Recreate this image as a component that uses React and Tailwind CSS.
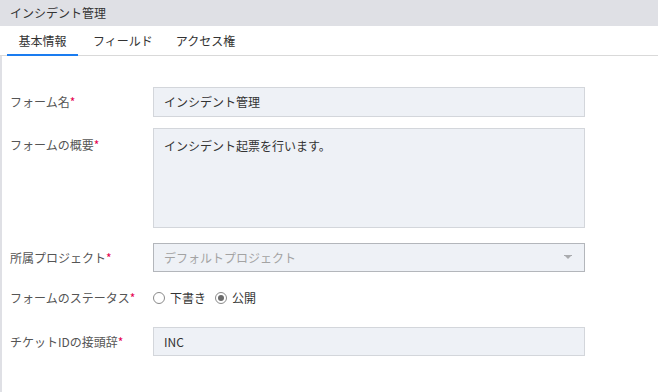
export default function App() {
  const font = { fontFamily: '"Noto Sans CJK JP", "Noto Sans", sans-serif' };
  const Label = ({ children }) => (
    <div className="w-[151px] shrink-0 pl-[8px] text-[12px] text-[#555]">
      {children}
      <span className="text-[#e5004f]">*</span>
    </div>
  );
  return (
    <div className="w-[658px] h-[392px] bg-white overflow-hidden flex flex-col" style={font}>
      <div className="h-[26px] shrink-0 bg-[#dfe0e5] flex items-center pl-[10px] text-[12px] text-[#333]">
        インシデント管理
      </div>
      <div className="h-[30px] shrink-0 flex items-end border-b border-[#d9d9d9] pl-[7px]">
        <div className="w-[71px] h-[29px] flex items-center justify-center text-[12px] text-[#333] border-b-2 border-[#1a7cf0] -mb-px">
          基本情報
        </div>
        <div className="h-[29px] flex items-center pl-[15px] text-[12px] text-[#333]">フィールド</div>
        <div className="h-[29px] flex items-center pl-[23px] text-[12px] text-[#333]">アクセス権</div>
      </div>
      <div className="flex-1 border-l-2 border-[#dfe0e5] flex flex-col pt-[31px]">
        <div className="flex items-center h-[30px]">
          <Label>フォーム名</Label>
          <div className="w-[432px] h-[30px] bg-[#eef1f6] border border-[#d3d6db] flex items-center px-[10px] text-[12px] text-[#333]">
            インシデント管理
          </div>
        </div>
        <div className="flex items-start mt-[11px]">
          <div className="pt-[8px]"><Label>フォームの概要</Label></div>
          <div className="w-[432px] h-[100px] bg-[#eef1f6] border border-[#d3d6db] px-[10px] pt-[8px] text-[12px] text-[#333]">
            インシデント起票を行います。
          </div>
        </div>
        <div className="flex items-center h-[29px] mt-[15px]">
          <Label>所属プロジェクト</Label>
          <div className="w-[432px] h-[29px] bg-[#eef1f6] border border-[#b3b6bb] flex items-center justify-between px-[10px] text-[12px] text-[#a3a3a3]">
            <span>デフォルトプロジェクト</span>
            <svg width="8" height="5" viewBox="0 0 8 5" className="mr-[2px]">
              <rect x="0" y="0" width="8" height="1" fill="#a9abae" />
              <path d="M1 1 L7 1 L4 4 Z" fill="#a9abae" />
            </svg>
          </div>
        </div>
        <div className="flex items-center h-[26px] mt-[13px]">
          <Label>フォームのステータス</Label>
          <div className="flex items-center text-[12px] text-[#333]">
            <span className="w-[12px] h-[12px] rounded-full border border-[#8a8a8a] bg-white mr-[5px]" />
            <span>下書き</span>
            <span className="w-[12px] h-[12px] rounded-full border border-[#8a8a8a] bg-white ml-[9px] mr-[5px] flex items-center justify-center">
              <span className="w-[6px] h-[6px] rounded-full bg-[#6b6b6b]" />
            </span>
            <span>公開</span>
          </div>
        </div>
        <div className="flex items-center h-[29px] mt-[16px]">
          <Label>チケットIDの接頭辞</Label>
          <div className="w-[432px] h-[29px] bg-[#eef1f6] border border-[#d3d6db] flex items-center px-[10px] text-[12px] text-[#333]">
            INC
          </div>
        </div>
      </div>
    </div>
  );
}
